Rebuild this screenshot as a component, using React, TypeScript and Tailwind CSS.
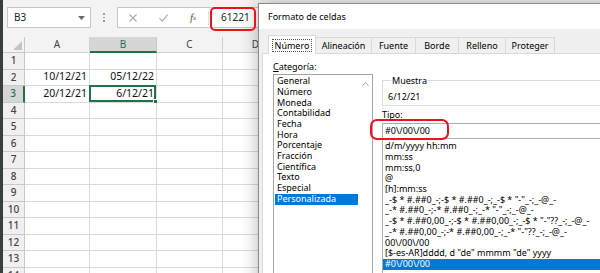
import React from 'react';

const columns = [
  { id: 'A', width: 'w-[65px]' },
  { id: 'B', width: 'w-[67px]' },
  { id: 'C', width: 'w-[66px]' },
  { id: 'D', width: 'w-[66px]' },
];

const values: Record<string, string> = {
  A2: '10/12/21',
  B2: '05/12/22',
  A3: '20/12/21',
  B3: '6/12/21',
};

const categories = [
  'General',
  'Número',
  'Moneda',
  'Contabilidad',
  'Fecha',
  'Hora',
  'Porcentaje',
  'Fracción',
  'Científica',
  'Texto',
  'Especial',
  'Personalizada',
];

const formats = [
  'd/m/yyyy hh:mm',
  'mm:ss',
  'mm:ss,0',
  '@',
  '[h]:mm:ss',
  '_-$ * #.##0_-;-$ * #.##0_-;_-$ * "-"_-;_-@_-',
  '_-* #.##0_-;-* #.##0_-;_-* "-"_-;_-@_-',
  '_-$ * #.##0,00_-;-$ * #.##0,00_-;_-$ * "-"??_-;_-@_-',
  '_-* #.##0,00_-;-* #.##0,00_-;_-* "-"??_-;_-@_-',
  '00\\/00\\/00',
  '[$-es-AR]dddd, d "de" mmmm "de" yyyy',
  '#0\\/00\\/00',
];

const tabs = [
  { label: 'Alineación', width: 'w-[57px]' },
  { label: 'Fuente', width: 'w-[45px]' },
  { label: 'Borde', width: 'w-[44px]' },
  { label: 'Relleno', width: 'w-[48px]' },
  { label: 'Proteger', width: 'w-[50px]' },
];

const rows = Array.from({ length: 14 }, (_, i) => i + 1);

function FormulaBar() {
  return (
    <div className="h-[37px] shrink-0 bg-[#f3f3f3] flex items-start pt-[7px] pl-[4px]">
      <div className="w-[84px] h-[21px] bg-white border border-[#c6c6c6] flex items-center justify-between pl-[6px] pr-[5px] text-[10px] text-[#222]">
        <span>B3</span>
        <svg width="7" height="4" viewBox="0 0 7 4">
          <path d="M0 0h7L3.5 4z" fill="#6a6a6a" />
        </svg>
      </div>
      <div className="w-[26px] h-[21px] flex flex-col items-center justify-center gap-[2px]">
        <span className="w-[1.5px] h-[1.5px] bg-[#9a9a9a]" />
        <span className="w-[1.5px] h-[1.5px] bg-[#9a9a9a]" />
        <span className="w-[1.5px] h-[1.5px] bg-[#9a9a9a]" />
      </div>
      <div className="w-[220px] h-[21px] bg-white border border-[#c6c6c6] flex items-center">
        <div className="w-[30px] flex justify-center">
          <svg width="8" height="8" viewBox="0 0 8 8">
            <path d="M0.5 0.5l7 7M7.5 0.5l-7 7" stroke="#ababab" strokeWidth="1.1" />
          </svg>
        </div>
        <div className="w-[30px] flex justify-center">
          <svg width="9" height="8" viewBox="0 0 9 8">
            <path d="M0.5 4.2l2.8 3L8.5 0.7" stroke="#ababab" strokeWidth="1.1" fill="none" />
          </svg>
        </div>
        <div className="w-[30px] flex justify-center text-[#555] font-['Liberation_Serif',serif] italic text-[11px] leading-none">
          <span>f</span>
          <span className="text-[7px] mt-[3px]">x</span>
        </div>
        <div className="w-px h-[14px] bg-[#e1e1e1]" />
        <span className="pl-[12px] text-[10px] text-[#222]">61221</span>
      </div>
    </div>
  );
}

function Grid() {
  return (
    <div className="flex flex-col text-[10px]">
      <div className="h-[16px] flex bg-[#f3f3f3] text-[#444]">
        <div className="w-[22px] h-full relative border-r border-b border-[#c8c8c8]">
          <svg className="absolute right-[2px] bottom-[2px]" width="9" height="9" viewBox="0 0 9 9">
            <path d="M9 0V9H0z" fill="#c4c4c4" />
          </svg>
        </div>
        {columns.map((c) =>
          c.id === 'B' ? (
            <div
              key={c.id}
              className={`${c.width} shrink-0 h-full flex items-center justify-center bg-[#d6d6d6] border-r border-[#c8c8c8] border-b-2 border-b-[#217346] text-[#217346]`}
            >
              {c.id}
            </div>
          ) : (
            <div
              key={c.id}
              className={`${c.width} shrink-0 h-full flex items-center justify-center border-r border-b border-[#d0d0d0]`}
            >
              {c.id}
            </div>
          )
        )}
      </div>
      {rows.map((r) => (
        <div key={r} className="h-[16.5px] flex">
          <div
            className={
              r === 3
                ? 'w-[22px] shrink-0 h-full flex items-center justify-center bg-[#d6d6d6] border-b border-[#c8c8c8] border-r-2 border-r-[#217346] text-[#217346] font-medium'
                : 'w-[22px] shrink-0 h-full flex items-center justify-center bg-[#f0f0f0] border-b border-r border-[#c8c8c8] text-[#444] font-medium'
            }
          >
            {r}
          </div>
          {columns.map((c) => {
            const key = `${c.id}${r}`;
            return (
              <div
                key={key}
                className={`${c.width} shrink-0 h-full relative flex items-center justify-end pr-[2px] border-r border-b border-[#dadada] text-[10.5px] text-[#111]`}
              >
                {values[key]}
                {key === 'B3' && (
                  <div className="absolute -left-px -top-px right-0 bottom-0 border-2 border-[#217346]">
                    <div className="absolute -right-[4px] -bottom-[4px] w-[5px] h-[5px] bg-[#217346] border border-white" />
                  </div>
                )}
              </div>
            );
          })}
        </div>
      ))}
    </div>
  );
}

function Dialog() {
  return (
    <div className="absolute left-[258px] top-[3px] w-[380px] h-[300px] bg-[#f0f0f0] border border-[#8c8c8c] shadow-[0_0_16px_rgba(0,0,0,0.3)] text-[9px] text-black leading-[11px]">
      <div className="h-[25px] bg-white flex items-center pl-[9px]">Formato de celdas</div>
      <div className="pl-[3px] pt-[6px]">
        <div className="flex items-end h-[18px] pl-[6px]">
          <div className="w-[48px] h-[19px] -mb-px relative z-10 bg-white border-t border-x border-[#d9d9d9] flex items-center justify-center">
            <span className="border border-dotted border-[#555] px-[2px]">Número</span>
          </div>
          {tabs.map((t) => (
            <div
              key={t.label}
              className={`${t.width} h-[16px] -ml-px border-t border-x border-[#d9d9d9] flex items-center justify-center`}
            >
              {t.label}
            </div>
          ))}
        </div>
        <div className="h-[240px] bg-white border border-[#d9d9d9] flex pl-[10px] pt-[7px]">
          <div className="w-[100px] shrink-0 flex flex-col">
            <div>
              <span className="underline">C</span>ategoría:
            </div>
            <div className="mt-[2px] h-[200px] border border-[#a5a5a5] flex">
              <div className="w-[85px] px-px pt-[1.3px]">
                {categories.map((c) => (
                  <div
                    key={c}
                    className={
                      c === 'Personalizada'
                        ? 'h-[10.7px] leading-[10.7px] pl-[2px] bg-[#0078d7] text-white'
                        : 'h-[10.7px] leading-[10.7px] pl-[2px]'
                    }
                  >
                    {c}
                  </div>
                ))}
              </div>
              <div className="flex-1 flex justify-center pt-[7px]">
                <svg width="7" height="4" viewBox="0 0 7 4">
                  <path d="M0.5 3.5L3.5 0.7 6.5 3.5" stroke="#a0a0a0" strokeWidth="1" fill="none" />
                </svg>
              </div>
            </div>
          </div>
          <div className="ml-[9px] w-[240px] shrink-0 flex flex-col pt-[13.5px]">
            <fieldset className="border border-[#dcdcdc] pl-[5px] pb-[3.5px]">
              <legend className="ml-[3px] px-px">Muestra</legend>
              <div className="mt-[5px]">6/12/21</div>
            </fieldset>
            <div className="mt-[3px]">
              <span className="underline">T</span>ipo:
            </div>
            <div className="mt-[3px] h-[16.5px] border border-[#abadb3] flex items-center pl-[2px]">
              #0\/00\/00
            </div>
            <div className="h-[160px] border-x border-b border-[#abadb3] pt-[2.5px]">
              {formats.map((f, i) => (
                <div
                  key={i}
                  className={
                    i === formats.length - 1
                      ? 'h-[10.7px] leading-[10.7px] pl-[2px] whitespace-pre bg-[#0078d7] text-white'
                      : 'h-[10.7px] leading-[10.7px] pl-[2px] whitespace-pre'
                  }
                >
                  {f}
                </div>
              ))}
            </div>
          </div>
        </div>
      </div>
    </div>
  );
}

export default function App() {
  return (
    <div className="w-[600px] h-[273px] relative overflow-hidden bg-white font-['Noto_Sans',sans-serif]">
      <div className="flex h-full">
        <div className="w-[3px] shrink-0 bg-[#36403f]" />
        <div className="flex-1 flex flex-col">
          <FormulaBar />
          <Grid />
        </div>
      </div>
      <Dialog />
      <div className="absolute left-[210px] top-[7px] w-[46px] h-[24px] rounded-[5px] border-2 border-[#e8131b] pointer-events-none" />
      <div className="absolute left-[370px] top-[119px] w-[79px] h-[21px] rounded-[7px] border-2 border-[#e8131b] pointer-events-none" />
    </div>
  );
}
